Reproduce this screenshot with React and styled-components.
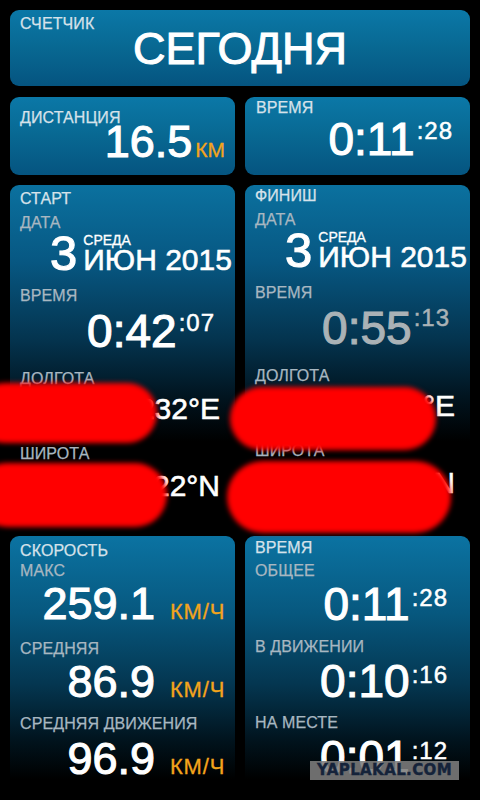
import React from "react";
import styled, { createGlobalStyle, css } from "styled-components";

const GlobalStyle = createGlobalStyle`
  html, body { margin: 0; padding: 0; background: #000; }
  body { font-family: "Liberation Sans", Arial, sans-serif; }
`;

const Page = styled.div`
  position: relative;
  width: 480px;
  height: 800px;
  overflow: hidden;
  box-sizing: border-box;
  padding: 10px;
  background: #000;
  display: flex;
  flex-direction: column;
`;

const gradients = {
  short: "linear-gradient(180deg, #0b78a7 0%, #086892 50%, #055480 100%)",
  tall: "linear-gradient(180deg, #0b719f 0%, #075883 22%, #04344f 45%, #01141f 62%, #000 75%)",
  bottom: "linear-gradient(180deg, #0b73a2 0%, #07587f 30%, #043650 58%, #01131d 80%, #000 95%)",
};

const Row = styled.div`
  display: grid;
  grid-template-columns: ${(p) => (p.single ? "1fr" : "1fr 1fr")};
  column-gap: 10px;
  height: ${(p) => p.h}px;
  margin-top: ${(p) => p.mt || 0}px;
  flex-shrink: 0;
`;

const Panel = styled.div`
  position: relative;
  border-radius: 9px;
  background: ${(p) => gradients[p.variant || "short"]};
  box-sizing: border-box;
  padding: ${(p) => p.pad};
  display: flex;
  flex-direction: column;
  min-width: 0;
`;

const Label = styled.div`
  font-size: ${(p) => p.size || 16}px;
  line-height: 1;
  color: ${(p) => (p.tone === "head" ? "#d6e2ea" : "#a8b7c1")};
  margin-top: ${(p) => p.mt || 0}px;
  white-space: nowrap;
  letter-spacing: 0.1px;
  -webkit-text-stroke: 0.25px ${(p) => (p.tone === "head" ? "#d6e2ea" : "#a8b7c1")};
`;

const Headline = styled.div`
  font-size: 45px;
  line-height: 1;
  color: #fff;
  text-align: center;
  margin-top: -6px;
  -webkit-text-stroke: 1px #fff;
`;

const bigText = css`
  line-height: 1;
  color: ${(p) => p.color || "#fff"};
  white-space: nowrap;
  -webkit-text-stroke: 1.1px ${(p) => p.color || "#fff"};
`;

const BigNum = styled.span`
  ${bigText};
  font-size: ${(p) => p.size || 46}px;
`;

const ValueRow = styled.div`
  display: flex;
  justify-content: flex-end;
  align-items: baseline;
  margin-top: ${(p) => p.mt || 0}px;
  margin-right: ${(p) => p.mr || 0}px;
`;

const Unit = styled.span`
  font-size: ${(p) => p.size || 22}px;
  line-height: 1;
  color: #f3a41c;
  margin-left: ${(p) => p.ml || 3}px;
  letter-spacing: ${(p) => p.ls || 0}px;
  white-space: nowrap;
  flex-shrink: 0;
  -webkit-text-stroke: 0.3px #f3a41c;
`;

const TimeRow = styled.div`
  display: flex;
  justify-content: flex-end;
  align-items: flex-start;
  margin-top: ${(p) => p.mt || 0}px;
  margin-right: ${(p) => p.mr || 0}px;
`;

const Sup = styled.span`
  font-size: 24px;
  line-height: 1;
  letter-spacing: 1px;
  color: ${(p) => p.color || "#fff"};
  margin-top: ${(p) => p.mt || 3}px;
  margin-left: 2px;
  white-space: nowrap;
  -webkit-text-stroke: 0.5px ${(p) => p.color || "#fff"};
`;

const DateRow = styled.div`
  display: flex;
  align-items: flex-end;
  padding-left: 30px;
  margin-top: ${(p) => p.mt || 0}px;
`;

const DayNum = styled.span`
  ${bigText};
  font-size: 49px;
`;

const DateCol = styled.div`
  display: flex;
  flex-direction: column;
  margin-left: 6px;
  margin-bottom: 3px;
`;

const Weekday = styled.span`
  font-size: 14px;
  line-height: 1;
  color: #fff;
  -webkit-text-stroke: 0.3px #fff;
`;

const MonthYear = styled.span`
  font-size: 30px;
  line-height: 1;
  color: #fff;
  margin-top: -2px;
  white-space: nowrap;
  -webkit-text-stroke: 0.6px #fff;
`;

const Coord = styled.div`
  font-size: 30px;
  line-height: 1;
  color: #fff;
  text-align: right;
  margin-top: ${(p) => p.mt || 0}px;
  white-space: nowrap;
  -webkit-text-stroke: 0.6px #fff;
`;

const SpeedRow = styled.div`
  display: flex;
  align-items: baseline;
  margin-top: ${(p) => p.mt || 0}px;
`;

const SpeedNum = styled.span`
  ${bigText};
  font-size: 45px;
  width: 135px;
  flex-shrink: 0;
  text-align: right;
`;

const Blob = styled.div`
  position: absolute;
  background: #ff0000;
  border-radius: 999px;
  filter: blur(2.5px);
`;

const Watermark = styled.div`
  position: absolute;
  left: 310px;
  top: 761px;
  width: 149px;
  height: 19px;
  background: rgba(125, 125, 125, 0.88);
  color: #15233a;
  font-family: "DejaVu Sans", sans-serif;
  font-weight: 700;
  font-size: 15px;
  line-height: 19px;
  text-align: center;
  letter-spacing: 0.4px;
  -webkit-text-stroke: 0.4px #15233a;
`;

function SideBlock({ title, shift, time, sec, color, supMt, lon, lat }) {
  return (
    <Panel variant="tall" pad={`${shift}px 15px 0 10px`}>
      <Label tone="head">{title}</Label>
      <Label mt={8}>ДАТА</Label>
      <DateRow mt={-2}>
        <DayNum>3</DayNum>
        <DateCol>
          <Weekday>СРЕДА</Weekday>
          <MonthYear>ИЮН 2015</MonthYear>
        </DateCol>
      </DateRow>
      <Label mt={10}>ВРЕМЯ</Label>
      <TimeRow mt={4} mr={5}>
        <BigNum color={color}>{time}</BigNum>
        <Sup color={color} mt={supMt}>{sec}</Sup>
      </TimeRow>
      <Label mt={17}>ДОЛГОТА</Label>
      <Coord mt={7}>{lon}</Coord>
      <Label mt={22}>ШИРОТА</Label>
      <Coord mt={9}>{lat}</Coord>
    </Panel>
  );
}

export default function App() {
  return (
    <>
      <GlobalStyle />
      <Page>
        <Row single h={76}>
          <Panel pad="6px 10px 0">
            <Label tone="head">СЧЕТЧИК</Label>
            <Headline>СЕГОДНЯ</Headline>
          </Panel>
        </Row>

        <Row h={78} mt={11}>
          <Panel pad="13px 10px 0">
            <Label tone="head">ДИСТАНЦИЯ</Label>
            <ValueRow mt={-7}>
              <BigNum size={45}>16.5</BigNum>
              <Unit size={21}>КМ</Unit>
            </ValueRow>
          </Panel>
          <Panel pad="3px 17px 0 11px">
            <Label tone="head">ВРЕМЯ</Label>
            <TimeRow mt={0}>
              <BigNum>0:11</BigNum>
              <Sup mt={3}>:28</Sup>
            </TimeRow>
          </Panel>
        </Row>

        <Row h={342} mt={10}>
          <SideBlock title="СТАРТ" shift={6} time="0:42" sec=":07" supMt={3} lon="232°E" lat="22°N" />
          <SideBlock title="ФИНИШ" shift={3} time="0:55" sec=":13" color="#aab2b6" supMt={1} lon="°E" lat="°N" />
        </Row>

        <Row h={256} mt={9}>
          <Panel variant="bottom" pad="7px 10px 0">
            <Label tone="head">СКОРОСТЬ</Label>
            <Label mt={4}>МАКС</Label>
            <SpeedRow mt={2}>
              <SpeedNum>259.1</SpeedNum>
              <Unit ml={15} ls={0.8}>КМ/Ч</Unit>
            </SpeedRow>
            <Label mt={15}>СРЕДНЯЯ</Label>
            <SpeedRow mt={2}>
              <SpeedNum>86.9</SpeedNum>
              <Unit ml={15} ls={0.8}>КМ/Ч</Unit>
            </SpeedRow>
            <Label mt={12}>СРЕДНЯЯ ДВИЖЕНИЯ</Label>
            <SpeedRow mt={4}>
              <SpeedNum>96.9</SpeedNum>
              <Unit ml={15} ls={0.8}>КМ/Ч</Unit>
            </SpeedRow>
          </Panel>
          <Panel variant="bottom" pad="4px 0 0 10px">
            <Label tone="head">ВРЕМЯ</Label>
            <Label mt={7}>ОБЩЕЕ</Label>
            <TimeRow mt={2} mr={22}>
              <BigNum>0:11</BigNum>
              <Sup mt={5}>:28</Sup>
            </TimeRow>
            <Label mt={12}>В ДВИЖЕНИИ</Label>
            <TimeRow mt={3} mr={22}>
              <BigNum>0:10</BigNum>
              <Sup mt={5}>:16</Sup>
            </TimeRow>
            <Label mt={11}>НА МЕСТЕ</Label>
            <TimeRow mt={3} mr={22}>
              <BigNum>0:01</BigNum>
              <Sup mt={5}>:12</Sup>
            </TimeRow>
          </Panel>
        </Row>

        <Blob style={{ left: -25, top: 383, width: 182, height: 60 }} />
        <Blob style={{ left: 230, top: 387, width: 206, height: 63 }} />
        <Blob style={{ left: -25, top: 463, width: 192, height: 64 }} />
        <Blob style={{ left: 227, top: 461, width: 224, height: 72 }} />

        <Watermark>YAPLAKAL.COM</Watermark>
      </Page>
    </>
  );
}
